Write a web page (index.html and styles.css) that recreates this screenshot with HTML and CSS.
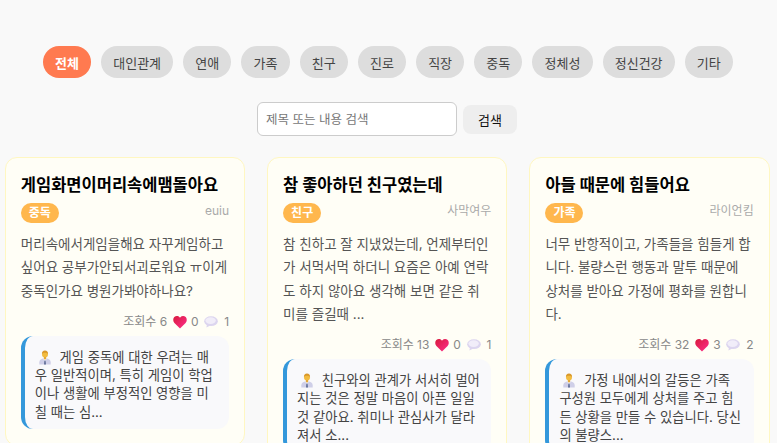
FILE: index.html
```html
<!DOCTYPE html>
<html lang="ko">
<head>
    <meta charset="UTF-8">
    <title>고민 게시판</title>
    <link rel="stylesheet" href="styles.css">
</head>
<body>
    <svg class="defs" width="0" height="0" aria-hidden="true">
        <defs>
            <linearGradient id="heartFill" x1="0" y1="0" x2="1" y2="1">
                <stop offset="0" stop-color="#d81a3c"/>
                <stop offset="1" stop-color="#ff2f8e"/>
            </linearGradient>
            <symbol id="heart" viewBox="0 0 14 14">
                <path d="M7 13.6 1.4 8C-.2 6.3-.1 3.6 1.3 2.1 2.9.6 5.3.7 6.6 2.3L7 2.8l.4-.5C8.7.7 11.1.6 12.7 2.1c1.4 1.5 1.5 4.2-.1 5.9z" fill="url(#heartFill)"/>
            </symbol>
            <symbol id="bubble" viewBox="0 0 14 12">
                <ellipse cx="7" cy="5.2" rx="6.8" ry="4.9" fill="#dcd5ef"/>
                <ellipse cx="6.6" cy="4.6" rx="5.2" ry="3.4" fill="#f1edf9"/>
                <path d="M3 8 2.4 11.6 6.4 9.6z" fill="#dcd5ef"/>
            </symbol>
            <symbol id="doctor" viewBox="0 0 16 17">
                <path d="M1.5 17v-2.6c0-2.4 2-3.9 4.2-4.2h4.6c2.2.3 4.2 1.8 4.2 4.2V17z" fill="#cfcfe8"/>
                <path d="M6 10.2 8 14l2-3.8z" fill="#f7f7fb"/>
                <path d="M7.4 12.4h1.2l.4 4.6H7z" fill="#4f5f8a"/>
                <circle cx="8" cy="5.6" r="3.4" fill="#f2bb3f"/>
                <path d="M4.5 5.4C4.2 2.6 5.8 1 8 1s3.8 1.6 3.5 4.4C10.6 4 9.4 3.6 8 3.6S5.4 4 4.5 5.4z" fill="#d9982a"/>
                <path d="M6.7 8.4h2.6v2.2L8 11.6l-1.3-1z" fill="#e5a836"/>
            </symbol>
        </defs>
    </svg>

    <nav class="categories">
        <button class="cat active">전체</button>
        <button class="cat">대인관계</button>
        <button class="cat">연애</button>
        <button class="cat">가족</button>
        <button class="cat">친구</button>
        <button class="cat">진로</button>
        <button class="cat">직장</button>
        <button class="cat">중독</button>
        <button class="cat">정체성</button>
        <button class="cat">정신건강</button>
        <button class="cat">기타</button>
    </nav>

    <form class="search">
        <input type="text" placeholder="제목 또는 내용 검색">
        <button type="button">검색</button>
    </form>

    <main class="cards">
        <article class="card">
            <h3>게임화면이머리속에맴돌아요</h3>
            <div class="card-info">
                <span class="tag">중독</span>
                <span class="author">euiu</span>
            </div>
            <p class="preview">머리속에서게임을해요 자꾸게임하고 싶어요 공부가안되서괴로워요 ㅠ이게 중독인가요 병원가봐야하나요?</p>
            <div class="stats">조회수 6 <svg class="icon-heart"><use href="#heart"/></svg> 0 <svg class="icon-bubble"><use href="#bubble"/></svg> 1</div>
            <div class="reply"><svg class="icon-doctor"><use href="#doctor"/></svg> 게임 중독에 대한 우려는 매우 일반적이며, 특히 게임이 학업이나 생활에 부정적인 영향을 미칠 때는 심...</div>
        </article>

        <article class="card">
            <h3>참 좋아하던 친구였는데</h3>
            <div class="card-info">
                <span class="tag">친구</span>
                <span class="author">사막여우</span>
            </div>
            <p class="preview">참 친하고 잘 지냈었는데, 언제부터인가 서먹서먹 하더니 요즘은 아예 연락도 하지 않아요 생각해 보면 같은 취미를 즐길때 ...</p>
            <div class="stats">조회수 13 <svg class="icon-heart"><use href="#heart"/></svg> 0 <svg class="icon-bubble"><use href="#bubble"/></svg> 1</div>
            <div class="reply"><svg class="icon-doctor"><use href="#doctor"/></svg> 친구와의 관계가 서서히 멀어지는 것은 정말 마음이 아픈 일일 것 같아요. 취미나 관심사가 달라져서 소...</div>
        </article>

        <article class="card">
            <h3>아들 때문에 힘들어요</h3>
            <div class="card-info">
                <span class="tag">가족</span>
                <span class="author">라이언킴</span>
            </div>
            <p class="preview">너무 반항적이고, 가족들을 힘들게 합니다. 불량스런 행동과 말투 때문에 상처를 받아요 가정에 평화를 원합니다.</p>
            <div class="stats">조회수 32 <svg class="icon-heart"><use href="#heart"/></svg> 3 <svg class="icon-bubble"><use href="#bubble"/></svg> 2</div>
            <div class="reply"><svg class="icon-doctor"><use href="#doctor"/></svg> 가정 내에서의 갈등은 가족 구성원 모두에게 상처를 주고 힘든 상황을 만들 수 있습니다. 당신의 불량스...</div>
        </article>
    </main>
</body>
</html>
```

FILE: styles.css
```css
:root {
    --accent-color: #ff7a50;
    --tag-color: #ffb74d;
    --reply-color: #3498db;
    --background-color: #f9f9f9;
    --text-color: #555555;
}

html, body {
    height: 100%;
    overflow: hidden;
}

body {
    margin: 0;
    padding: 46px 8px 0 4.8px;
    box-sizing: border-box;
    background-color: var(--background-color);
    font-family: 'Inter', 'Noto Sans CJK KR', sans-serif;
    color: var(--text-color);
}

.defs {
    display: block;
    height: 0;
}

.categories {
    display: flex;
    justify-content: center;
    gap: 10px;
    margin-left: 2px;
}

.cat {
    height: 32px;
    padding: 0 12.15px;
    border: none;
    border-radius: 16px;
    background-color: #dddddd;
    color: #444444;
    font-family: inherit;
    font-size: 13px;
    white-space: nowrap;
}

.cat.active {
    background-color: var(--accent-color);
    color: white;
    font-weight: bold;
}

.search {
    display: flex;
    justify-content: center;
    align-items: center;
    gap: 6px;
    margin: 24px 0 21px 0;
}

.search input {
    width: 200px;
    height: 34px;
    padding: 0 8px;
    border: 1px solid #cccccc;
    border-radius: 6px;
    box-sizing: border-box;
    background-color: white;
    font-family: inherit;
    font-size: 12.5px;
}

.search input::placeholder {
    color: #777777;
}

.search button {
    width: 54px;
    height: 29px;
    padding: 0;
    border: none;
    border-radius: 8px;
    background-color: #eeeeee;
    color: #111111;
    font-family: inherit;
    font-size: 13px;
}

.cards {
    display: grid;
    grid-template-columns: repeat(3, 240.3px);
    gap: 22px;
    align-items: start;
}

.card {
    padding: 16px 15px;
    border: 1px solid #fff7c2;
    border-radius: 12px;
    background-color: #fffef6;
}

.card h3 {
    margin: 0 0 7px 0;
    color: #000000;
    font-size: 16.5px;
    font-weight: bold;
    line-height: 22px;
}

.card-info {
    display: flex;
    justify-content: space-between;
    align-items: flex-start;
    margin-bottom: 10px;
}

.tag {
    padding: 0 8px;
    border-radius: 10px;
    background-color: var(--tag-color);
    color: white;
    font-size: 12px;
    font-weight: bold;
    line-height: 20px;
}

.author {
    color: #aaaaaa;
    font-size: 12px;
    line-height: 16px;
}

.preview {
    margin: 0 0 10px 0;
    font-size: 13.5px;
    line-height: 23.3px;
}

.stats {
    margin-bottom: 5px;
    color: #888888;
    font-size: 12px;
    line-height: 18px;
    text-align: right;
}

.reply {
    padding: 12px 10px 8px 10px;
    border-left: 4px solid var(--reply-color);
    border-radius: 12px;
    background-color: #f9f9fb;
    color: #444444;
    font-size: 13.3px;
    line-height: 18.3px;
}

.icon-heart {
    width: 14px;
    height: 14px;
    margin: 0 1px 0 2px;
    vertical-align: -3px;
}

.icon-bubble {
    width: 14px;
    height: 12px;
    margin: 0 2.5px;
    vertical-align: -2px;
}

.icon-doctor {
    width: 14px;
    height: 16px;
    margin: 0 4px 0 3px;
    vertical-align: -3px;
}
```
